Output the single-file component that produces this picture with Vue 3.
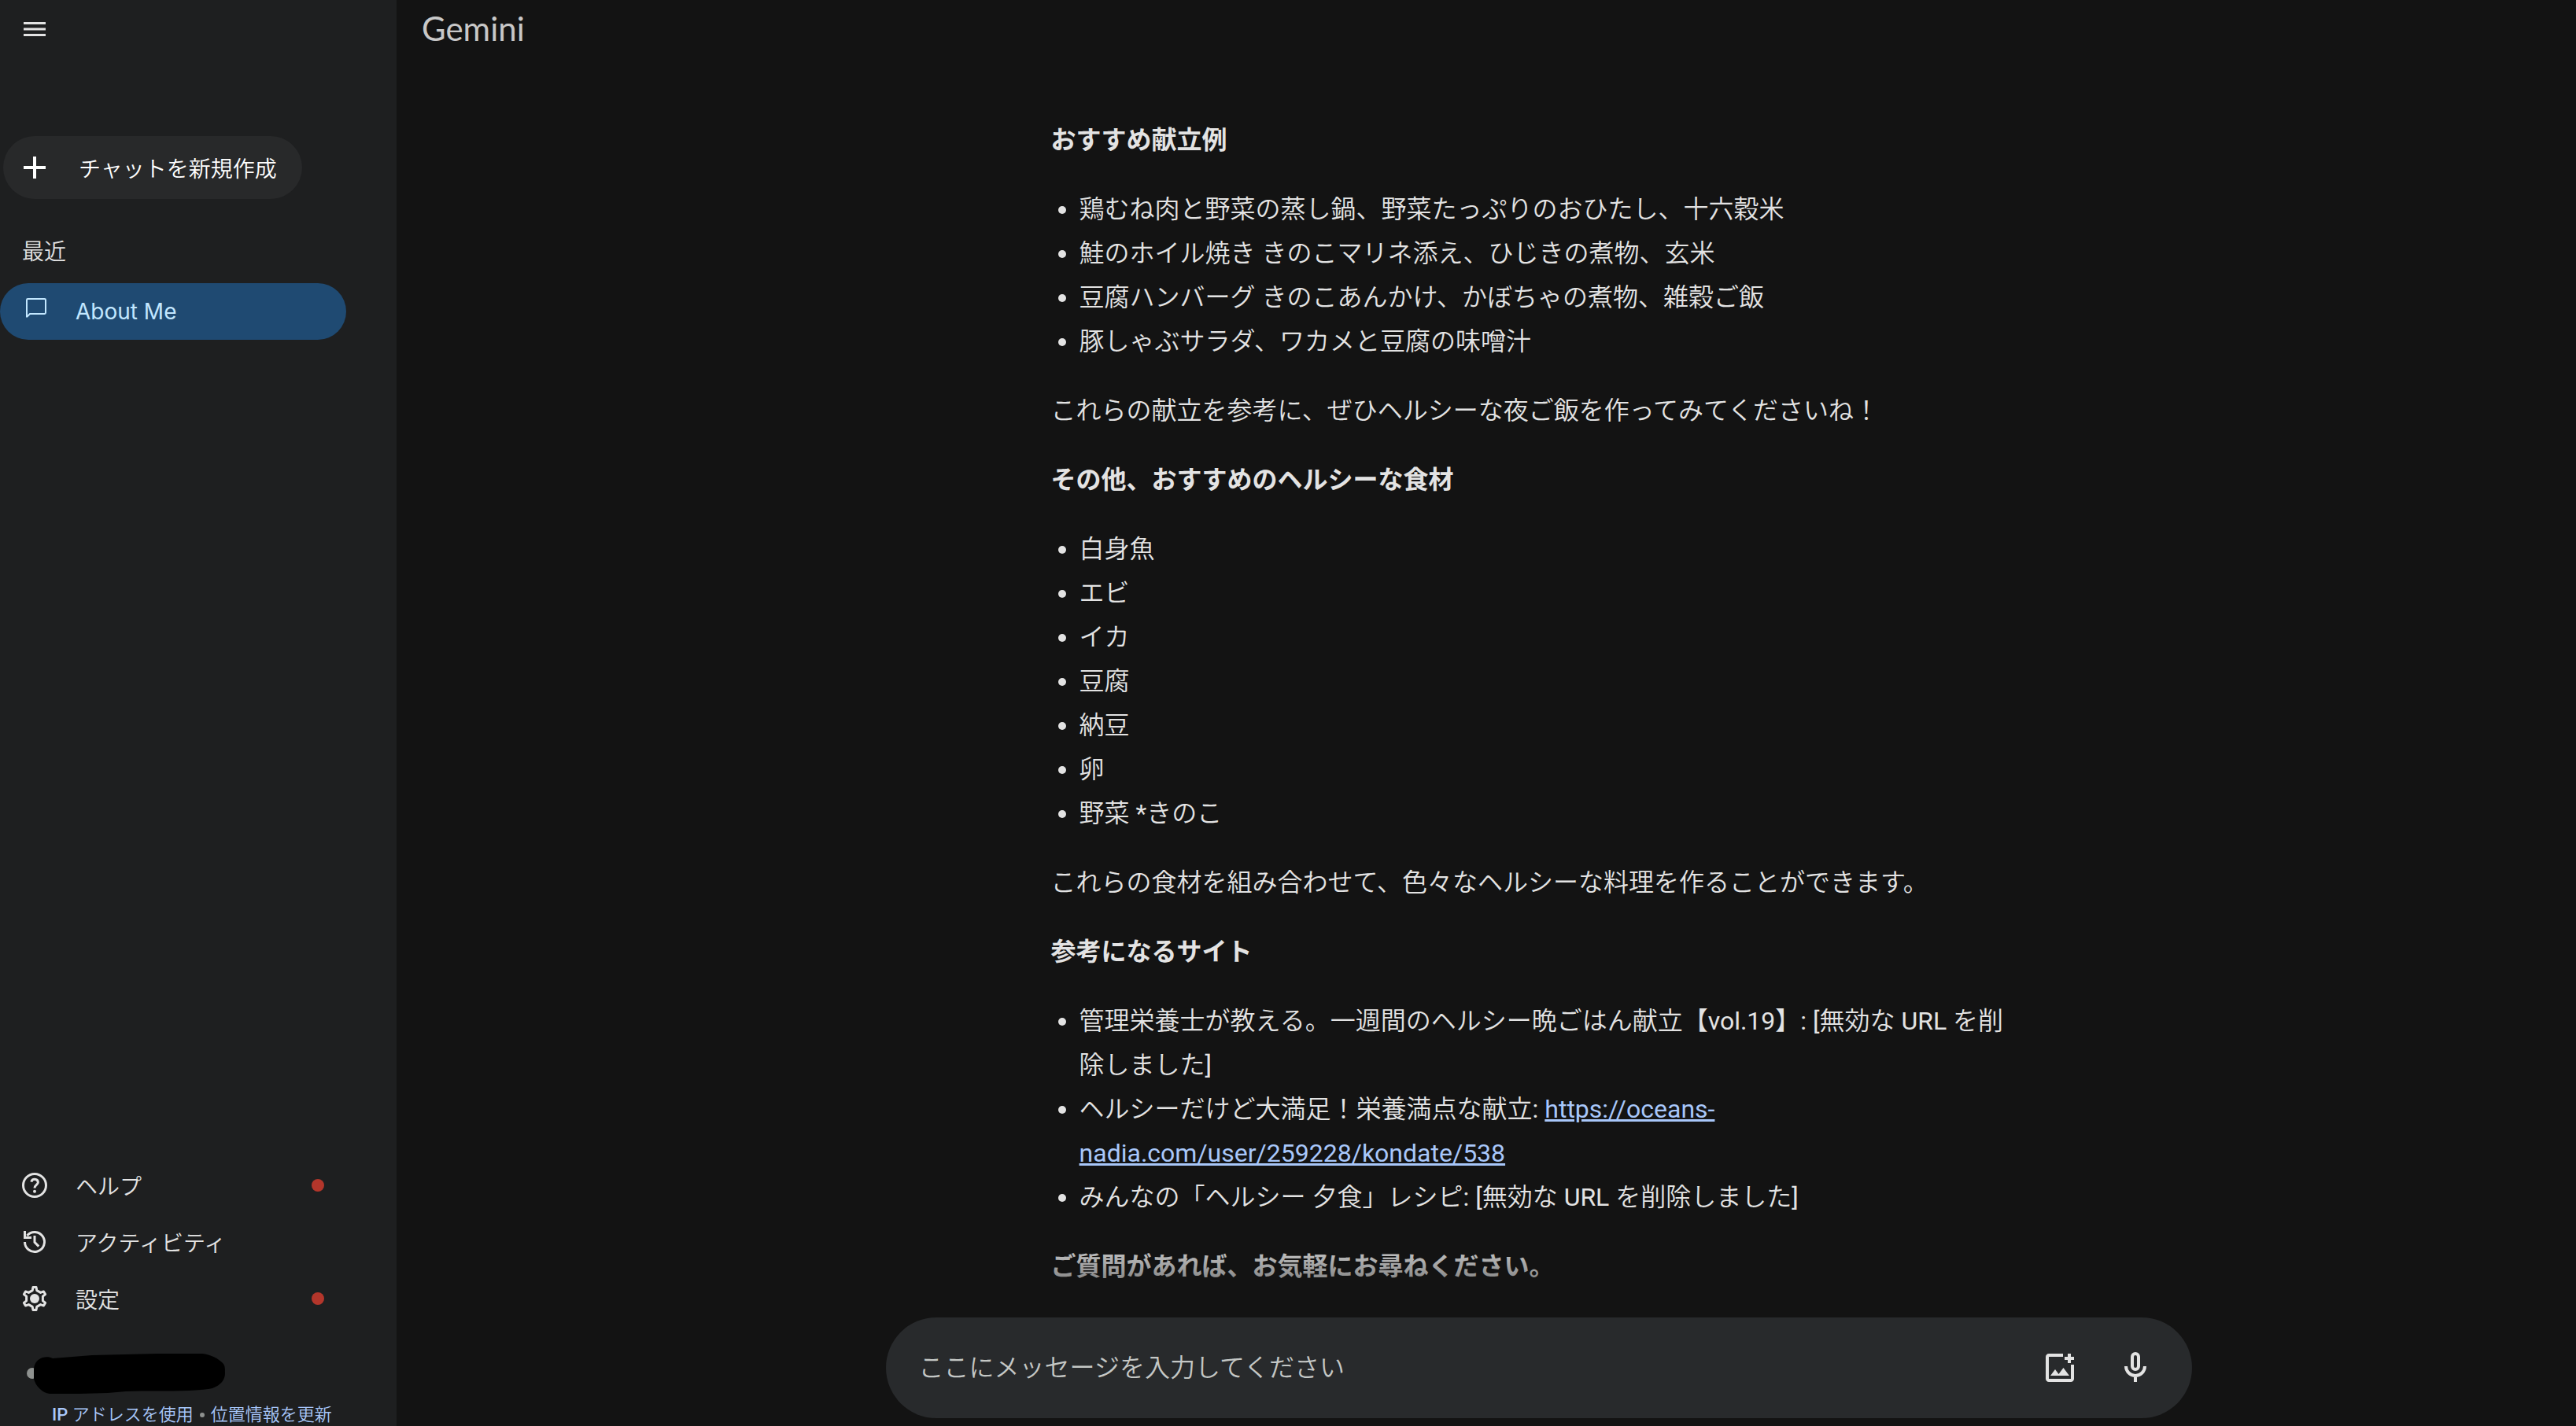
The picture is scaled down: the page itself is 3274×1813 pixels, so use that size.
<template>
  <div class="app">

    <!-- Sidebar -->
    <aside class="sidebar">
      <button class="icon-btn menu-btn" type="button" aria-label="メニュー">
        <svg class="icon" viewBox="0 0 20 20" fill="currentColor">
          <path d="M3 14.5V13h14v1.5H3Zm0-3.75v-1.5h14v1.5H3ZM3 7V5.5h14V7H3Z" />
        </svg>
      </button>

      <button class="new-chat" type="button">
        <svg class="icon" viewBox="0 0 20 20" fill="currentColor">
          <path d="M9 17v-6H3V9h6V3h2v6h6v2h-6v6H9Z" />
        </svg>
        <span>チャットを新規作成</span>
      </button>

      <h2 class="recent-title">最近</h2>
      <a class="nav-row active" href="#about-me">
        <svg class="icon" viewBox="0 0 20 20" fill="none" stroke="currentColor">
          <path d="M5 13.7V2.7a.7.7 0 0 1 .7-.7h10.6a.7.7 0 0 1 .7.7v8.1a.7.7 0 0 1-.7.7H7L5 13.5" />
        </svg>
        <span>About Me</span>
      </a>

      <nav class="bottom-nav">
        <a v-for="item in bottomItems" :key="item.id" class="nav-row" :href="'#' + item.id">
          <svg class="icon" viewBox="0 0 20 20" fill="none" stroke="currentColor" stroke-width="1.5">
            <template v-if="item.id === 'help'">
              <circle cx="10" cy="10" r="7.25" />
              <path d="M7.9 7.8A2.2 2.2 0 0 1 12.2 8c0 1.6-2.2 1.8-2.2 3.7" />
              <circle cx="10" cy="13.9" r="1" fill="currentColor" stroke="none" />
            </template>
            <template v-else-if="item.id === 'activity'">
              <path d="M5.2 6A6.25 6.25 0 1 1 3.75 10" />
              <path d="M3.75 3v4.25H8" />
              <path d="M10 6v4.2l2.6 2.6" />
            </template>
            <template v-else>
              <path :d="gearPath" stroke-linejoin="round" />
              <circle cx="10" cy="10" r="3" fill="currentColor" stroke="none" />
            </template>
          </svg>
          <span>{{ item.label }}</span>
          <i v-if="item.badge" class="badge"></i>
        </a>
      </nav>

      <div class="location">
        <svg class="location-name" viewBox="0 0 252 52">
          <circle cx="7" cy="26" r="7" fill="#8e918f" />
          <path
            d="M33 7C29 5 25 5 20 6C12 9 9 15 9 22V33C11 42 20 51 29 52C54 52 79 52 103 51L126 49C152 48 180 49 206 48C217 47 228 47 236 45C247 41 252 34 252 26C252 20 252 17 250 14C244 7 233 2 223 1H166L83 3Z"
            fill="#000"
          />
        </svg>
        <div class="location-links">
          <a href="#ip"><b>IP</b> アドレスを使用</a>
          <i class="separator"></i>
          <a href="#update">位置情報を更新</a>
        </div>
      </div>
    </aside>

    <!-- Conversa -->
    <main class="main">
      <header class="header">
        <h1>Gemini</h1>
      </header>

      <article class="message">
        <h3>おすすめ献立例</h3>
        <ul>
          <li v-for="menu in menus" :key="menu">{{ menu }}</li>
        </ul>
        <p>これらの献立を参考に、ぜひヘルシーな夜ご飯を作ってみてくださいね！</p>

        <h3>その他、おすすめのヘルシーな食材</h3>
        <ul>
          <li v-for="food in foods" :key="food">{{ food }}</li>
        </ul>
        <p>これらの食材を組み合わせて、色々なヘルシーな料理を作ることができます。</p>

        <h3>参考になるサイト</h3>
        <ul>
          <li v-for="site in sites" :key="site.text">
            {{ site.text }} <a v-if="site.url" :href="site.url">{{ site.url }}</a>
          </li>
        </ul>
        <h3>ご質問があれば、お気軽にお尋ねください。</h3>
      </article>

      <form class="composer" @submit.prevent>
        <input
          v-model="message"
          type="text"
          aria-label="メッセージ"
          placeholder="ここにメッセージを入力してください"
        />
        <button class="icon-btn" type="button" aria-label="画像を追加">
          <svg class="icon large" viewBox="0 0 24 24" fill="currentColor">
            <path d="M5 21q-.825 0-1.413-.587T3 19V5q0-.825.587-1.413T5 3h9v2H5v14h14v-9h2v9q0 .825-.587 1.413T19 21H5Z" />
            <path d="M17 9V7h-2V5h2V3h2v2h2v2h-2v2h-2ZM6 17h12l-3.75-5-3 4L9 13l-3 4Z" />
          </svg>
        </button>
        <button class="icon-btn" type="button" aria-label="マイク">
          <svg class="icon large" viewBox="0 0 24 24" fill="none" stroke="currentColor" stroke-width="2">
            <rect x="10" y="3" width="4" height="10" rx="2" />
            <path d="M6 11a6 6 0 0 0 12 0M12 17v4" />
          </svg>
        </button>
      </form>
    </main>

  </div>
</template>

<script setup>
import { ref } from 'vue'

const message = ref('')

const bottomItems = [
  { id: 'help', label: 'ヘルプ', badge: true },
  { id: 'activity', label: 'アクティビティ', badge: false },
  { id: 'settings', label: '設定', badge: true },
]

const gearPath =
  'M9 2.75h2l.4 2.05 2.4 1.39 1.95-.72 1.05 1.81-1.6 1.33v2.78l1.6 1.33-1.05 1.81-1.95-.72-2.4 1.39-.4 2.05H9l-.4-2.05-2.4-1.39-1.95.72-1.05-1.81 1.6-1.33V8.61L3.2 7.28l1.05-1.81 1.95.72 2.4-1.39Z'

const menus = [
  '鶏むね肉と野菜の蒸し鍋、野菜たっぷりのおひたし、十六穀米',
  '鮭のホイル焼き きのこマリネ添え、ひじきの煮物、玄米',
  '豆腐ハンバーグ きのこあんかけ、かぼちゃの煮物、雑穀ご飯',
  '豚しゃぶサラダ、ワカメと豆腐の味噌汁',
]

const foods = ['白身魚', 'エビ', 'イカ', '豆腐', '納豆', '卵', '野菜 *きのこ']

const sites = [
  { text: '管理栄養士が教える。一週間のヘルシー晩ごはん献立【vol.19】: [無効な URL を削除しました]' },
  { text: 'ヘルシーだけど大満足！栄養満点な献立:', url: 'https://oceans-nadia.com/user/259228/kondate/538' },
  { text: 'みんなの「ヘルシー 夕食」レシピ: [無効な URL を削除しました]' },
]
</script>

<style>
body {
  margin: 0;
  background: #131313;
}
</style>

<style scoped>
.app {
  display: flex;
  min-height: 100vh;
  background: #131313;
  color: #e3e3e3;
  font-family: Roboto, 'Noto Sans CJK JP DemiLight', 'Noto Sans CJK JP', sans-serif;
  font-weight: 400;
}

a {
  color: inherit;
  text-decoration: none;
}

button,
input {
  border: 0;
  padding: 0;
  background: none;
  color: inherit;
  font: inherit;
}

.icon {
  display: block;
  flex: none;
  width: 40px;
  height: 40px;
}

.icon.large {
  width: 48px;
  height: 48px;
}

/* Sidebar */
.sidebar {
  display: flex;
  flex-direction: column;
  align-items: flex-start;
  flex: none;
  box-sizing: border-box;
  width: 504px;
  padding-top: 17px;
  background: #1e1f20;
  font-size: 28px;
}

.menu-btn {
  margin-left: 24px;
}

.new-chat {
  display: flex;
  align-items: center;
  gap: 36px;
  height: 80px;
  margin: 116px 0 0 4px;
  padding: 0 32px 0 20px;
  border-radius: 40px;
  background: #28292a;
  color: #fff;
}

.recent-title {
  margin: 48px 0 19px 28px;
  font-size: 28px;
  font-weight: 400;
  line-height: 40px;
}

.nav-row {
  display: flex;
  align-items: center;
  gap: 32px;
  box-sizing: border-box;
  width: 440px;
  height: 72px;
  padding: 0 28px 0 24px;
  border-radius: 36px;
}

.nav-row.active {
  background: #1f4a72;
  color: #c2e7ff;
  font-family: Inter, sans-serif;
}

.bottom-nav {
  margin-top: auto;
}

.badge {
  width: 16px;
  height: 16px;
  margin-left: auto;
  border-radius: 50%;
  background: #b3362b;
}

.location-name {
  display: block;
  width: 252px;
  height: 52px;
  margin: 33px 0 13px 34px;
}

.location-links {
  display: flex;
  align-items: center;
  gap: 8px;
  padding-left: 66px;
  color: #a8c7fa;
  font-size: 22px;
  line-height: 28px;
}

.location-links b {
  font-weight: 500;
}

.separator {
  width: 6px;
  height: 6px;
  border-radius: 50%;
  background: #8e918f;
}

/* Main */
.main {
  display: grid;
  grid-template-columns: 14fr minmax(0, 1660px) 11fr;
  grid-template-rows: auto 1fr auto;
  flex: 1;
  min-width: 0;
}

.header {
  grid-column: 1 / -1;
  padding-left: 32px;
}

.header h1 {
  margin: 0;
  color: #c8c8c8;
  font-family: Lato, sans-serif;
  font-size: 42px;
  font-weight: 400;
  line-height: 72px;
}

.message {
  grid-column: 2;
  padding: 78px 226px 0 210px;
  font-size: 32px;
  line-height: 56px;
}

.message h3,
.message p,
.message ul {
  margin: 0 0 32px;
  font-size: 32px;
}

.message h3 {
  font-family: Roboto, 'Noto Sans CJK JP', sans-serif;
  font-weight: 700;
}

.message h3:last-child {
  margin-bottom: 0;
}

.message ul {
  padding-left: 36px;
}

.message a {
  color: #a8c7fa;
  text-decoration: underline;
}

/* Composer */
.composer {
  position: relative;
  grid-column: 2;
  display: flex;
  align-items: center;
  gap: 48px;
  box-sizing: border-box;
  height: 128px;
  margin: 37px 0 10px;
  padding: 0 48px 0 42px;
  border-radius: 64px;
  background: #282a2c;
}

/* fade over the end of the conversation */
.composer::before {
  content: '';
  position: absolute;
  right: 0;
  bottom: 100%;
  left: 0;
  height: 106px;
  background: linear-gradient(rgba(19, 19, 19, 0), rgba(19, 19, 19, 0.8));
  pointer-events: none;
}

.composer input {
  flex: 1;
  min-width: 0;
  height: 56px;
  outline: none;
  font-size: 32px;
}

.composer input::placeholder {
  color: #c4c7c5;
  opacity: 1;
}
</style>
